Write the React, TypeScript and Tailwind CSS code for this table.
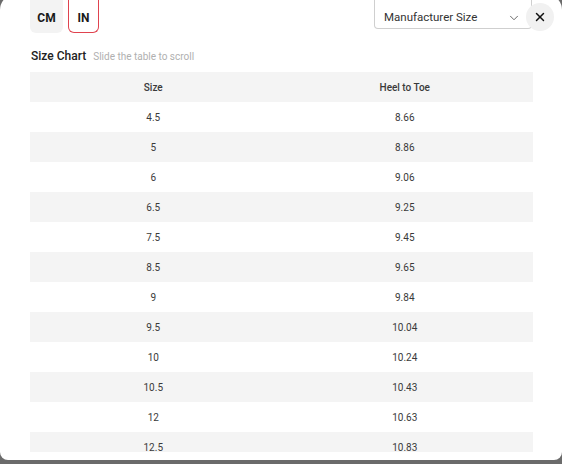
import { ChevronDown, X } from 'lucide-react';

const rows: [string, string][] = [
  ['4.5', '8.66'],
  ['5', '8.86'],
  ['6', '9.06'],
  ['6.5', '9.25'],
  ['7.5', '9.45'],
  ['8.5', '9.65'],
  ['9', '9.84'],
  ['9.5', '10.04'],
  ['10', '10.24'],
  ['10.5', '10.43'],
  ['12', '10.63'],
  ['12.5', '10.83'],
];

export default function App() {
  return (
    <div className="h-[464px] w-[562px] overflow-hidden bg-[#6b6b6b]" style={{ fontFamily: 'Roboto, "Liberation Sans", sans-serif' }}>
      <div className="-mt-[6px] h-[466px] rounded-t-[16px] rounded-b-[8px] bg-white">
        {/* header row */}
        <div className="flex items-start pl-[30px] pr-[8px]">
          <div className="flex gap-[5px]">
            <button className="flex h-[39px] w-[33px] items-center justify-center rounded-b-[6px] bg-[#f3f3f3] pt-[9px] text-[12px] font-bold text-[#1a1a1a]">
              CM
            </button>
            <button className="flex h-[39px] w-[31px] items-center justify-center rounded-b-[6px] border border-t-0 border-[#e0434f] pt-[9px] text-[12px] font-bold text-[#1a1a1a]">
              IN
            </button>
          </div>
          <div className="ml-auto flex h-[35px] w-[158px] items-center justify-between rounded-b-[4px] border border-t-0 border-[#cfcfcf] pt-[13px] pl-[9px] pr-[10px] text-[11.5px] text-[#333]">
            <span>Manufacturer Size</span>
            <ChevronDown className="h-[14px] w-[14px] text-[#555]" strokeWidth={1.5} />
          </div>
          <button className="relative -ml-[6px] mt-[9px] flex h-[28px] w-[28px] items-center justify-center rounded-full bg-[#f1f1f1] text-[#111]">
            <X className="h-[14px] w-[14px]" strokeWidth={2.5} />
          </button>
        </div>

        {/* title */}
        <div className="mt-[15px] flex items-baseline gap-[7px] pl-[31px]">
          <span className="text-[12px] font-medium leading-[16px] text-[#222]">Size Chart</span>
          <span className="text-[10px] text-[#b0b0b0]">Slide the table to scroll</span>
        </div>

        {/* table */}
        <div className="mt-[8px] ml-[30px] h-[380px] w-[503px] overflow-hidden">
          <table className="w-full table-fixed border-collapse text-[10px] text-[#3a3a3a]">
            <thead>
              <tr className="h-[30px] bg-[#f4f4f4]">
                <th className="pr-[5px] text-center font-medium">Size</th>
                <th className="pr-[5px] text-center font-medium">Heel to Toe</th>
              </tr>
            </thead>
            <tbody>
              {rows.map(([size, len], i) => (
                <tr key={size} className={i % 2 === 1 ? 'h-[30px] bg-[#f4f4f4]' : 'h-[30px] bg-white'}>
                  <td className="pr-[5px] text-center">{size}</td>
                  <td className="pr-[5px] text-center">{len}</td>
                </tr>
              ))}
            </tbody>
          </table>
        </div>
      </div>
    </div>
  );
}
